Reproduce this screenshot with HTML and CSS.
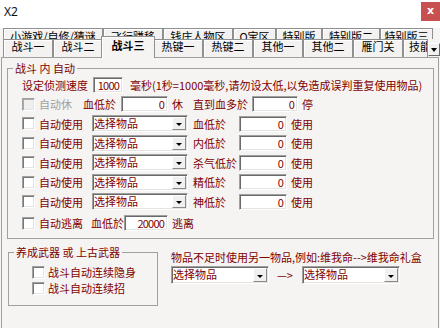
FILE: index.html
```html
<!DOCTYPE html>
<html lang="zh">
<head>
  <meta charset="UTF-8" />
  <title>X2</title>
  <link rel="stylesheet" href="styles.css">
</head>
<body>
  <div class="titlebar">
    <span class="title">X2</span>
    <span class="close">x</span>
  </div>

  <div class="tabs">
    <div class="tabrow back">
      <div class="tab">小游戏/自修/猜谜</div>
      <div class="tab">飞行赚移</div>
      <div class="tab">钱庄人物区</div>
      <div class="tab">O宝区</div>
      <div class="tab">特别版</div>
      <div class="tab">特别版二</div>
      <div class="tab">特别版三</div>
    </div>
    <div class="tabrow front">
      <div class="tab">战斗一</div>
      <div class="tab">战斗二</div>
      <div class="tab active">战斗三</div>
      <div class="tab">热键一</div>
      <div class="tab">热键二</div>
      <div class="tab">其他一</div>
      <div class="tab">其他二</div>
      <div class="tab">雁门关</div>
      <div class="tab cut">技能</div>
      <div class="spin"></div>
    </div>
  </div>

  <div class="panel">
    <fieldset class="group">
      <legend>战斗 内 自动</legend>

      <div class="row speed">
        <span>设定侦测速度</span>
        <span class="num">1000</span>
        <span class="note">毫秒(1秒=1000毫秒,请勿设太低,以免造成误判重复使用物品)</span>
      </div>

      <div class="row rest">
        <span class="cb disabled"></span>
        <span class="cap off">自动休</span>
        <span class="lbl">血低於</span>
        <span class="num n1">0</span>
        <span>休</span>
        <span class="lbl l2">直到血多於</span>
        <span class="num n2">0</span>
        <span>停</span>
      </div>

      <div class="row item">
        <span class="cb"></span>
        <span class="cap">自动使用</span>
        <span class="sel"><span class="val">选择物品</span><i class="drop"></i></span>
        <span class="lbl">血低於</span>
        <span class="num">0</span>
        <span class="unit">使用</span>
      </div>
      <div class="row item">
        <span class="cb"></span>
        <span class="cap">自动使用</span>
        <span class="sel"><span class="val">选择物品</span><i class="drop"></i></span>
        <span class="lbl">内低於</span>
        <span class="num">0</span>
        <span class="unit">使用</span>
      </div>
      <div class="row item">
        <span class="cb"></span>
        <span class="cap">自动使用</span>
        <span class="sel"><span class="val">选择物品</span><i class="drop"></i></span>
        <span class="lbl">杀气低於</span>
        <span class="num">0</span>
        <span class="unit">使用</span>
      </div>
      <div class="row item">
        <span class="cb"></span>
        <span class="cap">自动使用</span>
        <span class="sel"><span class="val">选择物品</span><i class="drop"></i></span>
        <span class="lbl">精低於</span>
        <span class="num">0</span>
        <span class="unit">使用</span>
      </div>
      <div class="row item">
        <span class="cb"></span>
        <span class="cap">自动使用</span>
        <span class="sel"><span class="val">选择物品</span><i class="drop"></i></span>
        <span class="lbl">神低於</span>
        <span class="num">0</span>
        <span class="unit">使用</span>
      </div>

      <div class="row escape">
        <span class="cb"></span>
        <span class="cap">自动逃离</span>
        <span class="lbl">血低於</span>
        <span class="num">20000</span>
        <span class="unit">逃离</span>
      </div>
    </fieldset>

    <div class="bottom">
      <fieldset class="group weapon">
        <legend>养成武器 或 上古武器</legend>
        <div class="row">
          <span class="cb"></span>
          <span class="cap">战斗自动连续隐身</span>
        </div>
        <div class="row">
          <span class="cb"></span>
          <span class="cap">战斗自动连续招</span>
        </div>
      </fieldset>

      <div class="hint">
        <p>物品不足时使用另一物品,例如:维我命-->维我命礼盒</p>
        <div class="pick">
          <span class="sel"><span class="val">选择物品</span><i class="drop"></i></span>
          <span class="arrow">—&gt;</span>
          <span class="sel"><span class="val">选择物品</span><i class="drop"></i></span>
        </div>
      </div>
    </div>
  </div>
</body>
</html>
```

FILE: styles.css
```css
* {
  box-sizing: border-box;
  margin: 0;
  padding: 0;
}

body {
  width: 440px;
  height: 328px;
  overflow: hidden;
  background: #f5f4f2;
  font-family: "Noto Sans CJK SC", sans-serif;
  font-size: 11px;
  color: #800000;
}

/* window title */
.titlebar {
  height: 28px;
  background: #fff;
  display: flex;
  justify-content: space-between;
  align-items: flex-start;
}

.title {
  font-family: "Noto Sans", sans-serif;
  font-size: 12px;
  line-height: 16px;
  padding: 4px 0 0 4px;
  color: #111;
}

.close {
  width: 19px;
  height: 19px;
  margin-top: 2px;
  background: #c75050;
  color: #fff;
  font: bold 11px/17px "DejaVu Sans", sans-serif;
  text-align: center;
}

/* tabs */
.tabs {
  color: #000;
}

.tabrow {
  display: flex;
  padding-left: 3px;
}

.tab {
  border: 1px solid #8e8f8f;
  border-bottom: none;
  background: #f3f2f0;
  box-shadow: inset 1px 1px #fff;
  text-align: center;
  white-space: nowrap;
  overflow: hidden;
}

.back .tab {
  height: 11px;
  padding-top: 1px;
  line-height: 13px;
}

.back .tab:nth-child(1) { width: 100px; }
.back .tab:nth-child(2) { width: 60px; }
.back .tab:nth-child(3) { width: 70px; }
.back .tab:nth-child(4) { width: 43px; }
.back .tab:nth-child(5) { width: 46px; }
.back .tab:nth-child(6) { width: 58px; }
.back .tab:nth-child(7) { width: 53px; }

.front {
  height: 18px;
  align-items: flex-start;
}

.front .tab {
  width: 50px;
  height: 18px;
  line-height: 12px;
}

.front .tab.active {
  position: relative;
  z-index: 1;
  width: 54px;
  height: 22px;
  margin: -3px -2px -1px;
  padding-top: 2px;
  line-height: 13px;
  font-weight: bold;
  background: #f5f4f2;
}

.front .tab.cut {
  width: 25px;
  padding-left: 5px;
  text-align: left;
}

.spin {
  width: 12px;
  height: 13px;
  margin-top: 4px;
  border: 1px solid;
  border-color: #fff #696969 #696969 #fff;
  background: #f0f0f0;
  display: flex;
  justify-content: center;
  align-items: center;
}

.spin::after {
  content: "";
  border-style: solid;
  border-width: 4px 3px 0;
  border-color: #000 transparent transparent;
}

/* page body */
.panel {
  height: 271px;
  margin: 0 1px;
  padding: 4px 4px 0 5px;
  border: 1px solid #a0a0a0;
  border-bottom: none;
}

.group {
  border: 1px solid #a0a0a0;
  padding: 0 0 6px;
  min-width: 0;
}

.group legend {
  margin-left: 5px;
  padding: 0 2px;
  line-height: 13px;
}

.row {
  display: flex;
  align-items: center;
  height: 18px;
  padding-left: 14px;
  white-space: nowrap;
}

.cb {
  width: 13px;
  height: 13px;
  flex: none;
  background: #fff;
  border: 1px solid;
  border-color: #a0a0a0 #fff #fff #a0a0a0;
  box-shadow: inset 1px 1px #777, inset -1px -1px #e3e3e3;
}

.cb.disabled {
  background: #efefef;
  box-shadow: inset 1px 1px #aaa, inset -1px -1px #e3e3e3;
}

.cap {
  margin-left: 4px;
}

.off {
  color: #a0a0a0;
}

.num {
  height: 16px;
  flex: none;
  background: #fff;
  border: 1px solid;
  border-color: #a0a0a0 #fff #fff #a0a0a0;
  box-shadow: inset 1px 1px #696969, inset -1px -1px #e3e3e3;
  padding-right: 3px;
  line-height: 14px;
  text-align: right;
  letter-spacing: -0.8px;
}

.sel {
  display: flex;
  flex: none;
  height: 17px;
  padding: 1px;
  background: #fff;
  border: 1px solid;
  border-color: #a0a0a0 #fff #fff #a0a0a0;
  box-shadow: inset 1px 1px #696969, inset -1px -1px #e3e3e3;
}

.val {
  flex: 1;
  line-height: 13px;
}

.drop {
  width: 14px;
  background: #f0f0f0;
  border: 1px solid;
  border-color: #fff #8a8a8a #8a8a8a #fff;
  display: flex;
  justify-content: center;
  align-items: center;
}

.drop::after {
  content: "";
  margin-top: 2px;
  border-style: solid;
  border-width: 3px 3px 0;
  border-color: #000 transparent transparent;
}

.speed {
  margin-top: 1px;
}

.speed .num {
  width: 30px;
  margin: 0 7px 0 5px;
}

.rest {
  margin-top: 1px;
}

.rest .lbl {
  margin-left: 11px;
}

.rest .l2 {
  margin-left: 10px;
}

.rest .n1 {
  width: 47px;
  margin: 0 4px 0 5px;
}

.rest .n2 {
  width: 46px;
  margin: 0 4px;
}

.item {
  height: 17px;
  margin-top: 2.5px;
}

.rest + .item {
  margin-top: 2px;
}

.item .sel {
  width: 96px;
  margin-left: 9px;
}

.item .lbl {
  width: 46px;
  margin-left: 5px;
}

.item .num {
  width: 48px;
}

.unit {
  margin-left: 4px;
}

.escape {
  margin-top: 4px;
}

.escape .lbl {
  margin-left: 8px;
}

.escape .num {
  width: 44px;
}

/* lower part */
.bottom {
  display: flex;
  align-items: flex-start;
  margin-top: 7px;
}

.weapon {
  width: 150px;
  margin-left: 1px;
  padding-bottom: 9px;
}

.weapon .row {
  height: 16px;
  padding-left: 23px;
}

.weapon legend + .row {
  margin-top: 5px;
}

.weapon .cap {
  margin-left: 3px;
}

.hint {
  margin-left: 13px;
  padding-top: 4px;
  white-space: nowrap;
}

.hint p {
  line-height: 14px;
}

.pick {
  display: flex;
  align-items: center;
  margin-top: 2px;
}

.pick .sel {
  width: 98px;
  height: 18px;
}

.arrow {
  width: 18px;
  margin: 0 7px 0 8px;
}
```
